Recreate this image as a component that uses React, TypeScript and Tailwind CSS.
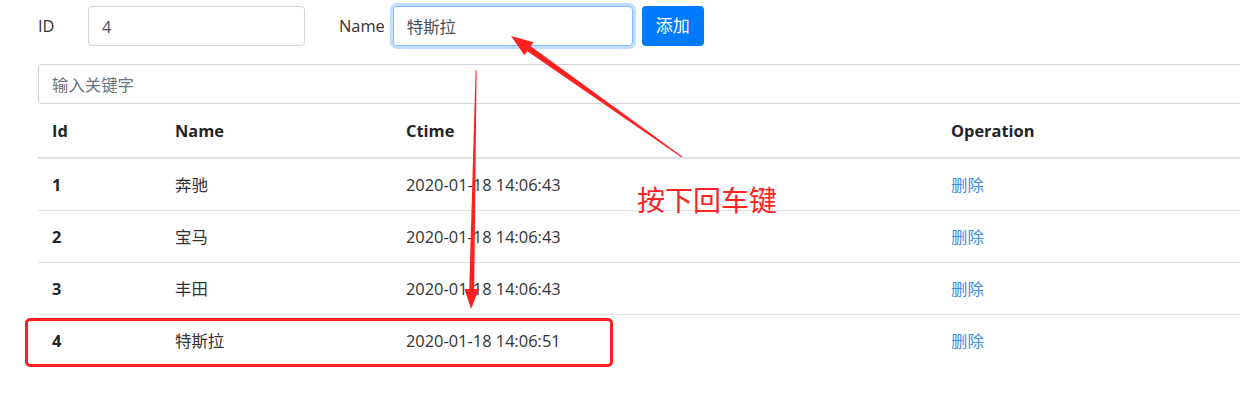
import React from 'react'

const rows = [
  { id: 1, name: '奔驰', ctime: '2020-01-18 14:06:43' },
  { id: 2, name: '宝马', ctime: '2020-01-18 14:06:43' },
  { id: 3, name: '丰田', ctime: '2020-01-18 14:06:43' },
  { id: 4, name: '特斯拉', ctime: '2020-01-18 14:06:51' },
]

const font = { fontFamily: '"Open Sans", "Noto Sans CJK SC", sans-serif' }

export default function App() {
  return (
    <div className="relative w-[1240px] h-[419px] overflow-hidden bg-white text-[16.4px] text-[#212529]" style={font}>
      <div className="pl-[38px] w-[1280px]">
        {/* form row */}
        <div className="flex items-center h-[40px] mt-[6px]">
          <label className="w-[50px] text-[#333] pt-[1px]">ID</label>
          <input
            readOnly
            value="4"
            className="w-[217px] h-[40px] px-[13px] border border-[#ced4da] rounded-[4px] text-[#495057] outline-none"
          />
          <label className="ml-[34px] mr-[8px] text-[#333] pt-[1px]">Name</label>
          <input
            readOnly
            value="特斯拉"
            className="w-[240px] h-[40px] px-[13px] border border-[#80bdff] rounded-[4px] text-[#495057] outline-none shadow-[0_0_0_3px_rgba(0,123,255,0.25)]"
          />
          <button className="ml-[9px] w-[62px] h-[40px] rounded-[4px] bg-[#007bff] text-white text-[17px]">
            添加
          </button>
        </div>

        {/* search */}
        <input
          readOnly
          placeholder="输入关键字"
          className="block mt-[18px] w-[1240px] h-[40px] px-[13px] border border-[#ced4da] rounded-[4px] outline-none placeholder:text-[#6c757d]"
        />

        {/* table */}
        <table className="w-[1240px] border-collapse table-fixed">
          <colgroup>
            <col className="w-[123px]" />
            <col className="w-[231px]" />
            <col className="w-[545px]" />
            <col />
          </colgroup>
          <thead>
            <tr className="h-[54px] border-b-2 border-[#dee2e6]">
              <th className="text-left font-bold px-[14px] pt-[2px]">Id</th>
              <th className="text-left font-bold px-[14px] pt-[2px]">Name</th>
              <th className="text-left font-bold px-[14px] pt-[2px]">Ctime</th>
              <th className="text-left font-bold px-[14px] pt-[2px]">Operation</th>
            </tr>
          </thead>
          <tbody>
            {rows.map((r) => (
              <tr key={r.id} className="h-[52px] border-t border-[#dee2e6] first:border-t-0">
                <td className="px-[14px] pt-[2px] font-bold">{r.id}</td>
                <td className="px-[14px] pt-[2px] text-[#333]">{r.name}</td>
                <td className="px-[14px] pt-[2px] text-[#333]">{r.ctime}</td>
                <td className="px-[14px] pt-[2px]">
                  <a className="text-[#3a8ee6] cursor-pointer">删除</a>
                </td>
              </tr>
            ))}
          </tbody>
        </table>
      </div>

      {/* annotations */}
      <div className="absolute left-[25px] top-[318px] w-[588px] h-[49px] border-[3px] border-[#ff1f1f] rounded-[5px]" />
      <div className="absolute left-[637px] top-[180px] text-[28px] leading-[40px] text-[#ff2323]" style={font}>
        按下回车键
      </div>
      <svg className="absolute left-0 top-0" width="1240" height="419" viewBox="0 0 1240 419">
        <polygon points="475.6,70 476.6,70 474.2,290 469.2,290" fill="#ff1f1f" />
        <polygon points="464.5,289 479,289 471,309" fill="#ff1f1f" />
        <polygon points="682.3,156.6 681.7,157.4 527.3,51.2 530.7,46.3" fill="#ff1f1f" />
        <polygon points="533.6,42.2 524.4,55.2 511,36" fill="#ff1f1f" />
      </svg>
    </div>
  )
}
